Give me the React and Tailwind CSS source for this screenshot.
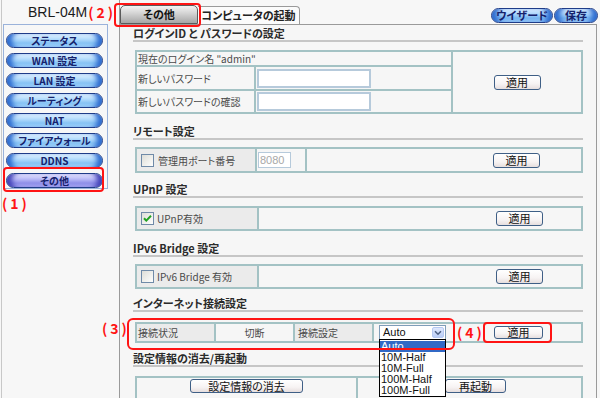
import React from 'react';

const blueNav =
  "bg-[linear-gradient(to_bottom,#e6f4ff_0%,#b2dbfc_40%,#86c2f4_70%,#a6d6fb_100%)] shadow-[inset_8px_0_5px_-3px_#2e6cd0,inset_-8px_0_5px_-3px_#2e6cd0]";
const purpleNav =
  "bg-[linear-gradient(to_bottom,#e8e8ff_0%,#b8b8f6_40%,#8e8ee8_70%,#acacf4_100%)] shadow-[inset_8px_0_5px_-3px_#4444b8,inset_-8px_0_5px_-3px_#4444b8]";

function NavBtn({ children, active }) {
  return (
    <div
      className={`w-[97px] h-[15px] shrink-0 rounded-full border border-[#1f3c88] flex items-center justify-center text-[10px] font-bold leading-none text-[#15216c] ${active ? purpleNav : blueNav}`}
    >
      {children}
    </div>
  );
}

function TopPill({ children, className }) {
  return (
    <div
      className={`h-[15px] rounded-full border border-[#1f3c88] flex items-center justify-center text-[11px] font-bold leading-none text-[#15216c] bg-[linear-gradient(to_bottom,#e2f1ff_0%,#a8d3fb_40%,#76b4f0_70%,#9ccbf8_100%)] shadow-[inset_8px_0_5px_-3px_#2e6cd0,inset_-8px_0_5px_-3px_#2e6cd0] ${className}`}
    >
      {children}
    </div>
  );
}

function Btn({ children, className }) {
  return (
    <div
      className={`border border-[#3f5f86] rounded-[3px] bg-[linear-gradient(to_bottom,#ffffff_0%,#f7f3f3_60%,#e6dede_100%)] flex items-center justify-center text-[11px] leading-none text-[#111] ${className}`}
    >
      {children}
    </div>
  );
}

function Heading({ children, className }) {
  return (
    <div
      className={`h-[17px] border-b-2 border-[#c6c6c6] pt-[1px] text-[11px] font-bold leading-[14px] text-[#2b2b2b] whitespace-nowrap ${className}`}
    >
      {children}
    </div>
  );
}

function Checkbox({ checked }) {
  return (
    <svg width="13" height="13" viewBox="0 0 13 13" className="shrink-0">
      <defs>
        <linearGradient id={checked ? 'cbg1' : 'cbg0'} x1="0" y1="0" x2="1" y2="1">
          <stop offset="0" stopColor="#dcdcd6" />
          <stop offset="1" stopColor="#ffffff" />
        </linearGradient>
      </defs>
      <rect x="0.5" y="0.5" width="12" height="12" fill={`url(#${checked ? 'cbg1' : 'cbg0'})`} stroke="#6f8aa8" />
      {checked && (
        <path d="M3 6.2 L5.3 8.6 L10 3.8" fill="none" stroke="#21a121" strokeWidth="2" />
      )}
    </svg>
  );
}

const T = 'border-[#a3c2c4]';

export default function App() {
  return (
    <div className="relative w-[600px] h-[398px] overflow-hidden bg-[#f7f7f7] flex font-['Noto_Sans_CJK_JP',sans-serif] [font-feature-settings:'palt'] text-[#4a4a4a]">
      {/* Sidebar */}
      <aside className="w-[120px] h-full shrink-0 border-r border-[#9a9a9a]">
        <div className="ml-[1px] h-full border-l border-[#c8c8c8]">
          <div className="h-[24px] flex items-center pl-[26px] whitespace-nowrap">
            <span className="shrink-0 font-['Liberation_Sans',sans-serif] text-[14px] leading-none text-[#1a1a1a]">BRL-04M</span>
            <span className="shrink-0 ml-[1px] text-[14px] font-bold leading-none text-[#ff1414] tracking-[3px]">(2)</span>
          </div>
          <div className="ml-[1px] w-[105px] h-[165px] border border-[#9ab2da] pt-[8px] pl-[2px] flex flex-col gap-[5px]">
            <NavBtn>ステータス</NavBtn>
            <NavBtn>WAN 設定</NavBtn>
            <NavBtn>LAN 設定</NavBtn>
            <NavBtn>ルーティング</NavBtn>
            <NavBtn>NAT</NavBtn>
            <NavBtn>ファイアウォール</NavBtn>
            <NavBtn>DDNS</NavBtn>
            <NavBtn active>その他</NavBtn>
          </div>
        </div>
      </aside>

      {/* Main */}
      <main className="w-[480px] h-full flex flex-col">
        <div className="h-[24px] flex items-end shrink-0">
          <div className="w-[78px] h-[19px] rounded-t-[5px] border border-[#5a5a5a] bg-[linear-gradient(to_bottom,#f4f4f4_0%,#d2d2d2_45%,#a6a6a6_100%)] flex items-center justify-center text-[11px] font-bold leading-none text-[#111]">
            その他
          </div>
          <div className="w-[102px] h-[18px] rounded-tr-[4px] border border-b-0 border-l-0 border-[#9a9a9a] bg-[#fbfbfb] flex items-center justify-center text-[11px] font-bold leading-none text-[#222]">
            コンピュータの起動
          </div>
          <div className="flex-1 h-full flex items-end justify-end pb-[1px] pr-[2px] gap-[1px]">
            <TopPill className="w-[62px]">ウイザード</TopPill>
            <TopPill className="w-[44px]">保存</TopPill>
          </div>
        </div>

        <div className="w-[477px] flex-1 border-t border-r border-[#9a9a9a] bg-[#f6f6f6] px-[13px]">
          {/* Login */}
          <Heading>ログインID と パスワードの設定</Heading>
          <div className={`mt-[8px] ml-[2px] w-[448px] h-[64px] border-2 ${T} flex text-[10px]`}>
            <div className={`w-[316px] flex flex-col border-r-2 ${T}`}>
              <div className={`h-[15px] border-b-2 ${T} pl-[1px] leading-[13px]`}>現在のログイン名 "admin"</div>
              <div className={`h-[24px] border-b-2 ${T} flex`}>
                <div className={`w-[119px] border-r-2 ${T} pl-[1px] flex items-center`}>新しいパスワード</div>
                <div className="flex-1 flex items-center pl-[1px]">
                  <div className="w-[114px] h-[19px] bg-white border-2 border-[#b6cadb]"></div>
                </div>
              </div>
              <div className="flex-1 flex">
                <div className={`w-[119px] border-r-2 ${T} pl-[1px] flex items-center`}>新しいパスワードの確認</div>
                <div className="flex-1 flex items-center pl-[1px]">
                  <div className="w-[114px] h-[19px] bg-white border-2 border-[#b6cadb]"></div>
                </div>
              </div>
            </div>
            <div className="flex-1 flex items-center justify-center">
              <Btn className="w-[47px] h-[15px]">適用</Btn>
            </div>
          </div>

          {/* Remote */}
          <Heading className="mt-[9px]">リモート設定</Heading>
          <div className={`mt-[7px] ml-[2px] w-[448px] h-[26px] border-2 ${T} flex text-[10px]`}>
            <div className={`w-[120px] border-r-2 ${T} bg-[#ebebeb] flex items-center pl-[4px] gap-[4px]`}>
              <Checkbox />
              <span>管理用ポート番号</span>
            </div>
            <div className={`w-[50px] border-r-2 ${T} flex items-center pl-[1px]`}>
              <div className="w-[33px] h-[16px] bg-white border border-[#b6cadb] font-['Liberation_Sans',sans-serif] text-[11px] leading-[14px] text-[#a8a8a8] pl-[1px]">8080</div>
            </div>
            <div className="flex-1 flex items-center justify-end pr-[41px]">
              <Btn className="w-[47px] h-[15px]">適用</Btn>
            </div>
          </div>

          {/* UPnP */}
          <Heading className="mt-[8px]">UPnP 設定</Heading>
          <div className={`mt-[8px] ml-[2px] w-[448px] h-[25px] border-2 ${T} flex text-[10px]`}>
            <div className={`w-[122px] border-r-2 ${T} bg-[#ebebeb] flex items-center pl-[4px] gap-[3px]`}>
              <Checkbox checked />
              <span>UPnP有効</span>
            </div>
            <div className="flex-1 flex items-center justify-end pr-[38px]">
              <Btn className="w-[47px] h-[15px]">適用</Btn>
            </div>
          </div>

          {/* IPv6 */}
          <Heading className="mt-[9px]">IPv6 Bridge 設定</Heading>
          <div className={`mt-[7px] ml-[2px] w-[448px] h-[25px] border-2 ${T} flex text-[10px]`}>
            <div className={`w-[122px] border-r-2 ${T} bg-[#ebebeb] flex items-center pl-[4px] gap-[3px]`}>
              <Checkbox />
              <span>IPv6 Bridge 有効</span>
            </div>
            <div className="flex-1 flex items-center justify-end pr-[38px]">
              <Btn className="w-[47px] h-[15px]">適用</Btn>
            </div>
          </div>

          {/* Internet */}
          <Heading className="mt-[6px]">インターネット接続設定</Heading>
          <div className={`mt-[10px] ml-[2px] w-[448px] h-[21px] border-2 ${T} flex text-[10px]`}>
            <div className={`w-[79px] border-r-2 ${T} bg-[#ebebeb] flex items-center pl-[1px]`}>接続状況</div>
            <div className={`w-[79px] border-r-2 ${T} flex items-center justify-center`}>切断</div>
            <div className={`w-[79px] border-r-2 ${T} bg-[#ebebeb] flex items-center pl-[3px]`}>接続設定</div>
            <div className="flex-1 flex items-center pl-[5px] pr-[38px]">
              <div className="w-[67px] h-[15px] bg-white border border-[#7f9db9] flex items-center">
                <span className="pl-[3px] font-['Liberation_Sans',sans-serif] text-[11px] leading-none text-[#111]">Auto</span>
                <div className="ml-auto mr-[1px] w-[12px] h-[11px] rounded-[2px] border border-[#b5c8f2] bg-[linear-gradient(to_bottom,#dfe8fd,#b9cdf7)] flex items-center justify-center">
                  <svg width="8" height="6" viewBox="0 0 8 6">
                    <path d="M1 1.2 L4 4.2 L7 1.2" fill="none" stroke="#4d6185" strokeWidth="1.6" />
                  </svg>
                </div>
              </div>
              <Btn className="ml-auto w-[49px] h-[13px]">適用</Btn>
            </div>
          </div>

          {/* Reset */}
          <Heading className="mt-[7px]">設定情報の消去/再起動</Heading>
          <div className={`mt-[9px] ml-[2px] w-[448px] h-[26px] border-2 ${T} flex text-[10px]`}>
            <div className={`w-[221px] border-r-2 ${T} flex items-start justify-center pt-[1px]`}>
              <Btn className="w-[113px] h-[14px]">設定情報の消去</Btn>
            </div>
            <div className="flex-1 flex items-start pl-[87px] pt-[1px]">
              <Btn className="w-[61px] h-[14px]">再起動</Btn>
            </div>
          </div>
        </div>
      </main>

      {/* Dropdown list (open select) */}
      <div className="absolute left-[379px] top-[339px] w-[67px] h-[58px] bg-white border border-black font-['Liberation_Sans',sans-serif] text-[11px] leading-[11px] text-[#111] flex flex-col pt-[1px]">
        <div className="h-[11px] shrink-0 bg-[#3169c6] text-white pl-[1px]">Auto</div>
        <div className="h-[11px] shrink-0 pl-[1px]">10M-Half</div>
        <div className="h-[11px] shrink-0 pl-[1px]">10M-Full</div>
        <div className="h-[11px] shrink-0 pl-[1px]">100M-Half</div>
        <div className="h-[11px] shrink-0 pl-[1px]">100M-Full</div>
      </div>

      {/* Annotations */}
      <div className="absolute left-[3px] top-[167px] w-[101px] h-[25px] border-2 border-[#ff1414] rounded-[4px]"></div>
      <div className="absolute left-[2px] top-[196px] text-[14px] font-bold leading-none text-[#ff1414] tracking-[3px]">(1)</div>
      <div className="absolute left-[114px] top-[3px] w-[87px] h-[24px] border-2 border-[#ff1414] rounded-[4px]"></div>
      <div className="absolute left-[127px] top-[318px] w-[328px] h-[32px] border-2 border-[#ff1414] rounded-[6px]"></div>
      <div className="absolute left-[102px] top-[321px] text-[14px] font-bold leading-none text-[#ff1414] tracking-[3px]">(3)</div>
      <div className="absolute left-[483px] top-[322px] w-[69px] h-[21px] border-2 border-[#ff1414] rounded-[4px]"></div>
      <div className="absolute left-[457px] top-[325px] text-[14px] font-bold leading-none text-[#ff1414] tracking-[3px]">(4)</div>
    </div>
  );
}
